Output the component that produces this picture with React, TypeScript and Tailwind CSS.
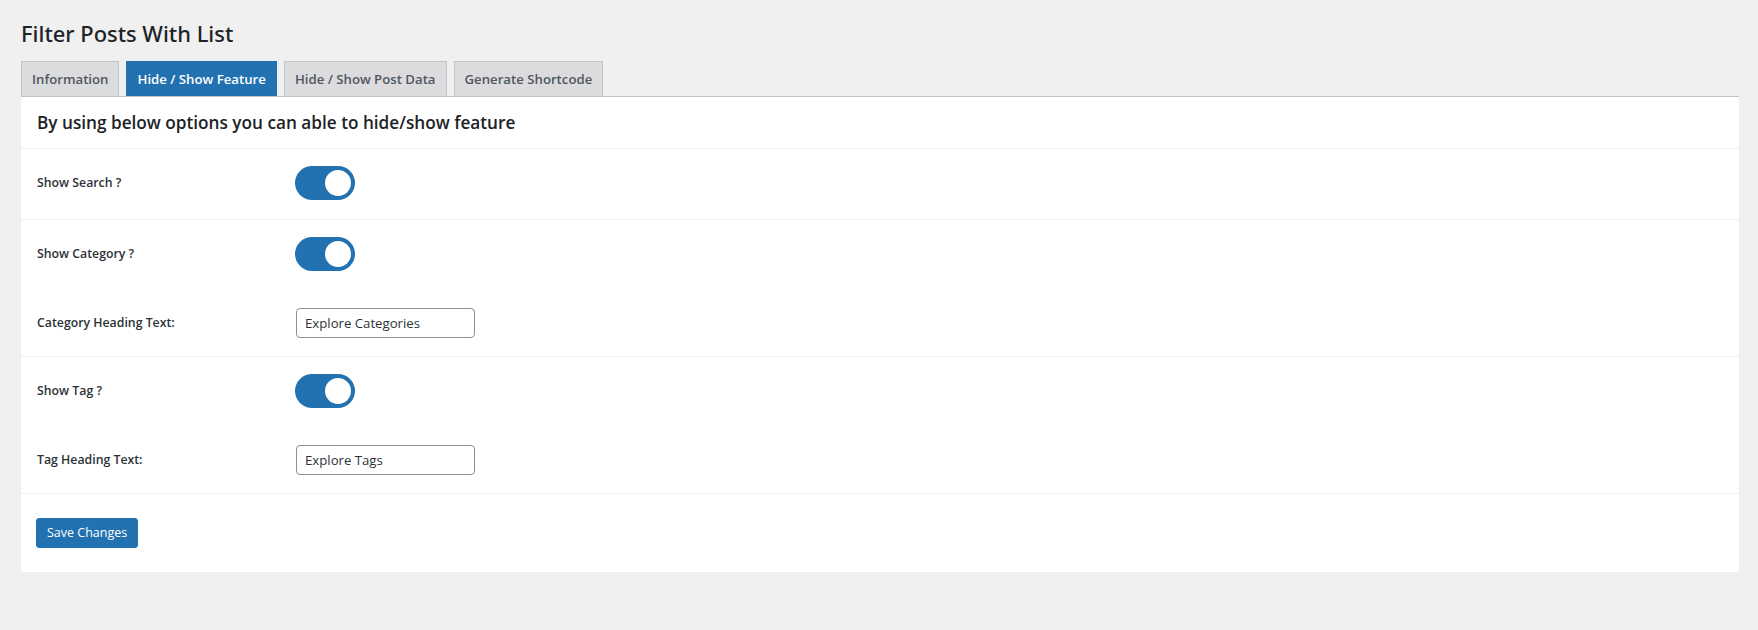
import React from 'react';

const tabs = ['Information', 'Hide / Show Feature', 'Hide / Show Post Data', 'Generate Shortcode'];
const activeTab = 'Hide / Show Feature';

function Toggle() {
  return (
    <span className="flex h-[34px] w-[60px] items-center justify-end rounded-full bg-[#2271b1] pr-[4px]">
      <span className="h-[26px] w-[26px] rounded-full bg-white" />
    </span>
  );
}

function Row({ label, height, children }: { label: string; height: string; children: React.ReactNode }) {
  return (
    <div className={`flex items-center pl-[16px] ${height}`}>
      <label className="w-[258px] text-[12.3px] font-semibold text-[#2c3338]">{label}</label>
      {children}
    </div>
  );
}

function TextField({ value }: { value: string }) {
  return (
    <input
      type="text"
      defaultValue={value}
      className="ml-px h-[30px] w-[179px] rounded-[4px] border border-[#8c8f94] bg-white px-[8px] text-[13.2px] text-[#2c3338] outline-none"
    />
  );
}

export default function App() {
  return (
    <div className="min-h-[630px] bg-[#f0f0f1] pl-[21px] pr-[19px] pt-[10px] font-['Open_Sans','Noto_Sans',sans-serif] text-[#1d2327]">
      <h1 className="pb-[4px] pt-[9px] font-['Noto_Sans','Open_Sans',sans-serif] text-[21.9px] font-medium leading-[30px]">
        Filter Posts With List
      </h1>

      <nav className="mt-[8px] flex gap-[7px] border-b border-[#c3c4c7]">
        {tabs.map((tab) =>
          tab === activeTab ? (
            <span
              key={tab}
              className="border border-b-0 border-[#2271b1] bg-[#2271b1] px-[10px] py-[5px] text-[13.2px] font-semibold leading-[24px] text-white"
            >
              {tab}
            </span>
          ) : (
            <span
              key={tab}
              className="border border-b-0 border-[#c3c4c7] bg-[#dcdcde] px-[10px] py-[5px] text-[13.2px] font-semibold leading-[24px] text-[#50575e]"
            >
              {tab}
            </span>
          )
        )}
      </nav>

      <div className="rounded-b-[3px] bg-white">
        <div className="flex h-[52px] items-center border-b border-[#f0f0f1] px-[16px]">
          <h2 className="text-[17.2px] font-semibold text-[#1d2327]">
            By using below options you can able to hide/show feature
          </h2>
        </div>

        <div className="border-b border-[#f0f0f1]">
          <Row label="Show Search ?" height="h-[70px] pb-[2px]">
            <Toggle />
          </Row>
        </div>

        <div className="border-b border-[#f0f0f1]">
          <Row label="Show Category ?" height="h-[70px] pb-[2px]">
            <Toggle />
          </Row>
          <Row label="Category Heading Text:" height="h-[66px]">
            <TextField value="Explore Categories" />
          </Row>
        </div>

        <div className="border-b border-[#f0f0f1]">
          <Row label="Show Tag ?" height="h-[70px] pb-[2px]">
            <Toggle />
          </Row>
          <Row label="Tag Heading Text:" height="h-[66px]">
            <TextField value="Explore Tags" />
          </Row>
        </div>

        <div className="flex h-[78px] items-center pl-[15px]">
          <button
            type="button"
            className="h-[30px] rounded-[3px] border border-[#2271b1] bg-[#2271b1] px-[10px] text-[12.5px] leading-[28px] text-white"
          >
            Save Changes
          </button>
        </div>
      </div>
    </div>
  );
}
